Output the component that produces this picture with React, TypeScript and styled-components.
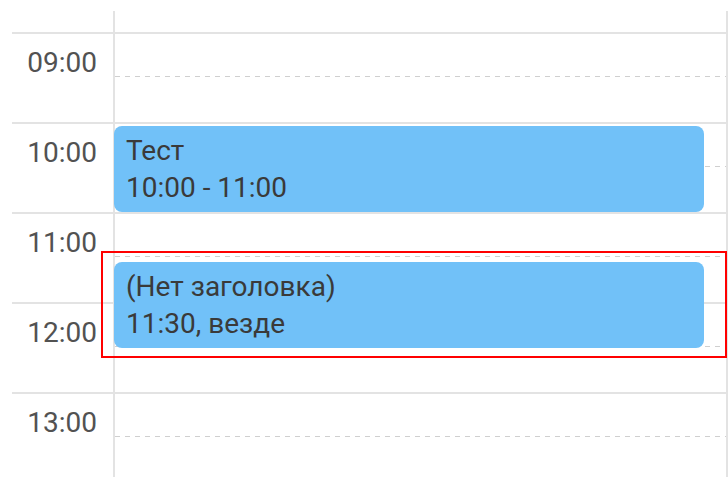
import React from 'react';
import styled, { createGlobalStyle } from 'styled-components';

const HOUR_HEIGHT = 90;
const HEAD_HEIGHT = 21;
const FIRST_HOUR = 9;

interface ICalendarEvent {
  id: number;
  title: string;
  subtitle: string;
  start: number; // hours, fractional
}

const hours = [9, 10, 11, 12, 13];

const events: ICalendarEvent[] = [
  { id: 1, title: 'Тест', subtitle: '10:00 - 11:00', start: 10 },
  { id: 2, title: '(Нет заголовка)', subtitle: '11:30, везде', start: 11.5 },
];

const GlobalStyle = createGlobalStyle`
  html, body {
    margin: 0;
    padding: 0;
    height: 100%;
    background: #fff;
    overflow: hidden;
  }
  body {
    font-family: Roboto, 'Liberation Sans', sans-serif;
  }
`;

const Page = styled.div`
  padding: 11px 0 0 12px;
`;

const Calendar = styled.div`
  position: relative;
  display: grid;
  grid-template-columns: 101px 1fr;
  grid-template-rows: ${HEAD_HEIGHT}px repeat(${hours.length}, ${HOUR_HEIGHT}px);
  border-right: 2px solid #e3e3e3;
`;

const GutterHead = styled.div``;

const ColumnHead = styled.div`
  border-left: 2px solid #e3e3e3;
`;

const TimeLabel = styled.div`
  box-sizing: border-box;
  border-top: 2px solid #e3e3e3;
  padding: 15px 16px 0 0;
  text-align: right;
  font-size: 28px;
  line-height: 28px;
  color: #525252;
`;

const Slot = styled.div`
  position: relative;
  box-sizing: border-box;
  border-top: 2px solid #e3e3e3;
  border-left: 2px solid #e3e3e3;

  /* half-hour marker */
  &::after {
    content: '';
    position: absolute;
    left: 0;
    right: 0;
    top: 42px;
    height: 1px;
    background-image: linear-gradient(to right, #cfcfcf 5px, transparent 5px);
    background-size: 10px 1px;
  }
`;

const EventCard = styled.div`
  position: absolute;
  left: 102px;
  right: 22px;
  height: 86px;
  box-sizing: border-box;
  padding: 6px 12px;
  border-radius: 8px;
  background: #71c1f8;
  color: #3a3a3a;
  font-size: 28px;
  line-height: 37px;
  white-space: nowrap;
  overflow: hidden;
`;

const SelectionFrame = styled.div`
  position: absolute;
  left: 89px;
  top: 240px;
  width: 626px;
  height: 107px;
  box-sizing: border-box;
  border: 2px solid #f00;
  pointer-events: none;
`;

const eventTop = (start: number) =>
  Math.round(HEAD_HEIGHT + (start - FIRST_HOUR) * HOUR_HEIGHT + 4 + (start % 1) * 2);

const pad = (h: number) => (h < 10 ? `0${h}` : `${h}`);

export default function App() {
  return (
    <Page>
      <GlobalStyle />
      <Calendar>
        <GutterHead />
        <ColumnHead />
        {hours.map((h) => (
          <React.Fragment key={h}>
            <TimeLabel>{pad(h)}:00</TimeLabel>
            <Slot />
          </React.Fragment>
        ))}
        {events.map((ev) => (
          <EventCard key={ev.id} style={{ top: eventTop(ev.start) }}>
            <div>{ev.title}</div>
            <div>{ev.subtitle}</div>
          </EventCard>
        ))}
        <SelectionFrame />
      </Calendar>
    </Page>
  );
}
